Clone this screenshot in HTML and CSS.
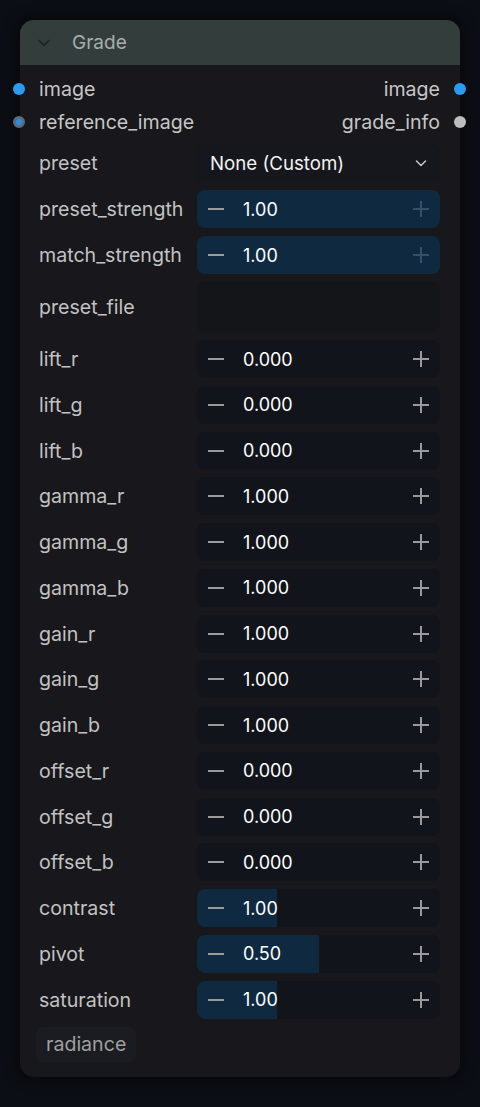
FILE: index.html
```html
<!DOCTYPE html>
<html>
<head>
<meta charset="utf-8">
<link rel="stylesheet" href="styles.css">
</head>
<body>
<div class="node">
  <div class="header">
    <svg class="collapse" width="14" height="14" viewBox="0 0 14 14"><path d="M2 4.5 L7 9.5 L12 4.5" fill="none" stroke="#1f2928" stroke-width="1.8" stroke-linecap="round" stroke-linejoin="round"/></svg>
    <span class="title">Grade</span>
  </div>
  <div class="slots">
    <div class="slot-row">
      <span class="dot dot-in blue"></span>
      <span class="slot-label">image</span>
      <span class="slot-label">image</span>
      <span class="dot dot-out blue"></span>
    </div>
    <div class="slot-row">
      <span class="dot dot-in ring"></span>
      <span class="slot-label">reference_image</span>
      <span class="slot-label">grade_info</span>
      <span class="dot dot-out grey"></span>
    </div>
  </div>
  <div class="widgets">
    <div class="w-row">
      <span class="w-label">preset</span>
      <div class="combo">
        <span class="combo-value">None (Custom)</span>
        <svg class="combo-arrow" width="14" height="14" viewBox="0 0 14 14"><path d="M2.5 5 L7 9.5 L11.5 5" fill="none" stroke="#c8c8c8" stroke-width="1.5" stroke-linecap="round" stroke-linejoin="round"/></svg>
      </div>
    </div>
    <div class="w-row">
      <span class="w-label">preset_strength</span>
      <div class="num full">
        <svg class="minus" width="18" height="18" viewBox="0 0 18 18"><path d="M1 9 H17" stroke="#9a9a9a" stroke-width="2"/></svg>
        <span class="val">1.00</span>
        <svg class="plus dim" width="18" height="18" viewBox="0 0 18 18"><path d="M1 9 H17 M9 1 V17" stroke="#34506a" stroke-width="2"/></svg>
      </div>
    </div>
    <div class="w-row">
      <span class="w-label">match_strength</span>
      <div class="num full">
        <svg class="minus" width="18" height="18" viewBox="0 0 18 18"><path d="M1 9 H17" stroke="#9a9a9a" stroke-width="2"/></svg>
        <span class="val">1.00</span>
        <svg class="plus dim" width="18" height="18" viewBox="0 0 18 18"><path d="M1 9 H17 M9 1 V17" stroke="#34506a" stroke-width="2"/></svg>
      </div>
    </div>
    <div class="w-row tall">
      <span class="w-label">preset_file</span>
      <div class="textbox"></div>
    </div>
  </div>
  <div class="widgets sliders" id="sliders"></div>
  <div class="footer">
    <span class="badge">radiance</span>
  </div>
</div>
<script src="app.js"></script>
</body>
</html>
```

FILE: app.js
```js
var rows = [
  ["lift_r", "0.000", 0], ["lift_g", "0.000", 0], ["lift_b", "0.000", 0],
  ["gamma_r", "1.000", 0], ["gamma_g", "1.000", 0], ["gamma_b", "1.000", 0],
  ["gain_r", "1.000", 0], ["gain_g", "1.000", 0], ["gain_b", "1.000", 0],
  ["offset_r", "0.000", 0], ["offset_g", "0.000", 0], ["offset_b", "0.000", 0],
  ["contrast", "1.00", 33], ["pivot", "0.50", 50], ["saturation", "1.00", 33]
];
var minus = '<svg class="minus" width="18" height="18" viewBox="0 0 18 18"><path d="M1 9 H17" stroke="#9a9a9a" stroke-width="2"/></svg>';
var plus = '<svg class="plus" width="18" height="18" viewBox="0 0 18 18"><path d="M1 9 H17 M9 1 V17" stroke="#9a9a9a" stroke-width="2"/></svg>';
var html = "";
rows.forEach(function (r) {
  html += '<div class="w-row"><span class="w-label">' + r[0] + '</span>' +
    '<div class="num">' +
    (r[2] ? '<div class="fill" style="width:' + r[2] + '%"></div>' : '') +
    minus + '<span class="val">' + r[1] + '</span>' + plus + '</div></div>';
});
document.getElementById("sliders").innerHTML = html;
```

FILE: styles.css
```css
html, body {
  margin: 0;
  padding: 0;
}
body {
  background: #0b0e14;
  font-family: Inter, "Noto Sans", sans-serif;
  width: 480px;
  height: 1107px;
  overflow: hidden;
}
.node {
  position: relative;
  margin: 20px 20px 0 20px;
  width: 440px;
  background: #18171b;
  border-radius: 14px;
  box-shadow: 0 0 14px 4px rgba(0, 0, 0, 0.45);
  padding-bottom: 15px;
}
.header {
  height: 45px;
  background: #333e3c;
  border-radius: 14px 14px 0 0;
  display: flex;
  align-items: center;
  padding-left: 17px;
}
.collapse {
  display: block;
}
.title {
  margin-left: 21px;
  font-size: 19px;
  color: #a7aeac;
}
.slots {
  padding-top: 7px;
}
.slot-row {
  position: relative;
  height: 33px;
  display: flex;
  align-items: center;
  justify-content: space-between;
  padding: 0 20px 0 19px;
}
.slot-label {
  font-size: 19.6px;
  color: #c6c6c6;
}
.dot {
  position: absolute;
  top: 50%;
  width: 12px;
  height: 12px;
  margin-top: -6px;
  border-radius: 50%;
  box-sizing: border-box;
}
.dot-in { left: -7px; }
.dot-out { right: -6px; }
.blue { background: #2b9bf2; }
.grey { background: #bdbdbd; }
.ring {
  background: #2b8fe0;
  border: 3px solid #5c6c7c;
}
.widgets {
  display: flex;
  flex-direction: column;
  gap: 8px;
  padding-left: 19px;
  margin-top: 6px;
}
.sliders {
  margin-top: 8px;
  gap: 7.75px;
}
.w-row {
  display: grid;
  grid-template-columns: 158px 243px;
  height: 38px;
  align-items: center;
}
.w-row.tall {
  height: 50px;
}
.w-label {
  font-size: 19.6px;
  color: #c2c2c2;
}
.combo {
  height: 100%;
  background: #15171c;
  border-radius: 8px;
  display: flex;
  align-items: center;
  justify-content: space-between;
  padding: 0 12px 0 13px;
}
.combo-value {
  font-size: 18.7px;
  color: #f2f2f2;
}
.combo-arrow { display: block; }
.textbox {
  height: 100%;
  background: #131519;
  border-radius: 8px;
}
.num {
  position: relative;
  height: 100%;
  background: #11141a;
  border-radius: 8px;
  display: flex;
  align-items: center;
  padding: 0 10px;
  overflow: hidden;
}
.num.full {
  background: #0f2a40;
}
.fill {
  position: absolute;
  left: 0;
  top: 0;
  bottom: 0;
  background: #0f2a40;
}
.minus, .plus, .val {
  position: relative;
}
.minus { display: block; }
.plus { display: block; margin-left: auto; }
.val {
  margin-left: 18px;
  font-size: 18px;
  color: #ffffff;
}
.footer {
  padding: 8px 0 0 16px;
}
.badge {
  display: inline-block;
  height: 35px;
  line-height: 35px;
  padding: 0 10px;
  background: #1a1c21;
  border-radius: 7px;
  font-size: 19.6px;
  color: #9f9f9f;
}
```
